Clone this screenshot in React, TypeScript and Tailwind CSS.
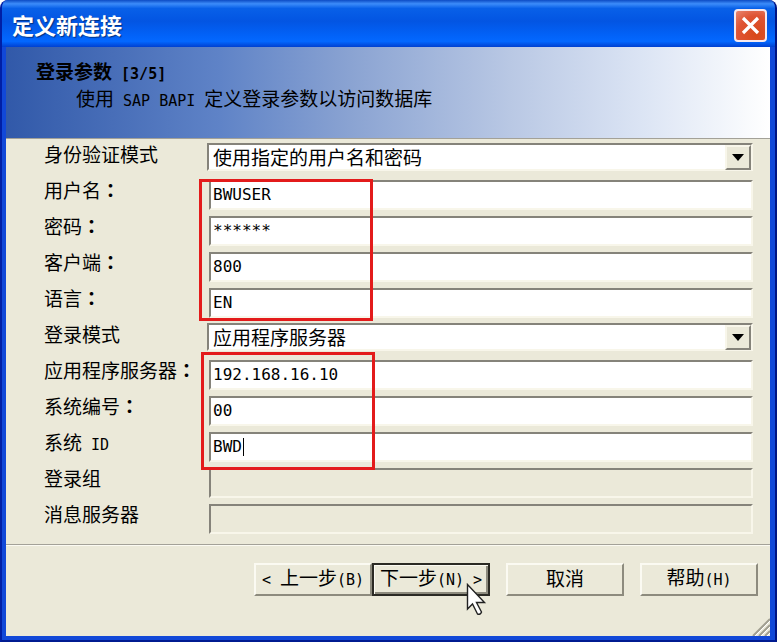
import React from 'react';

type Field = {
  id: string;
  label: string;
  value: string;
  type?: 'select';
  disabled?: boolean;
  caret?: boolean;
};

const authMode: Field = { id: 'authMode', label: '身份验证模式', value: '使用指定的用户名和密码', type: 'select' };

const credentials: Field[] = [
  { id: 'user', label: '用户名：', value: 'BWUSER' },
  { id: 'password', label: '密码：', value: '******' },
  { id: 'client', label: '客户端：', value: '800' },
  { id: 'language', label: '语言：', value: 'EN' }
];

const loginMode: Field = { id: 'loginMode', label: '登录模式', value: '应用程序服务器', type: 'select' };

const server: Field[] = [
  { id: 'appServer', label: '应用程序服务器：', value: '192.168.16.10' },
  { id: 'systemNumber', label: '系统编号：', value: '00' },
  { id: 'systemId', label: '系统 ID', value: 'BWD', caret: true }
];

const messageServer: Field[] = [
  { id: 'group', label: '登录组', value: '', disabled: true },
  { id: 'messageServer', label: '消息服务器', value: '', disabled: true }
];

// Latin runs use a smaller monospace face, the full-width colon is centred in its cell
const MixedText = ({ text }: { text: string }) => (
  <>
    {text.split(/([\x20-\x7e]+|：)/).map((part, index) => {
      if (part === '：') {
        return (
          <span key={index} className="font-['Noto_Sans_CJK_TC',sans-serif] font-bold" lang="zh-TW">
            {part}
          </span>
        );
      }
      return index % 2 ? (
        <span key={index} className="font-['DejaVu_Sans_Mono',monospace] text-[15px]">
          {part}
        </span>
      ) : (
        part
      );
    })}
  </>
);

const Row = ({ field }: { field: Field }) => (
  <div className="flex h-9 items-start">
    <label htmlFor={field.id} className="w-[163px] shrink-0 whitespace-pre leading-7">
      <MixedText text={field.label} />
    </label>
    {field.type === 'select' ? (
      <div className="relative mt-[3px] flex-1">
        <select
          id={field.id}
          className="block h-7 w-full appearance-none border-2 border-t-[#85837a] border-l-[#85837a] border-r-[#f8f6ea] border-b-[#f8f6ea] bg-white pl-1 leading-6"
        >
          <option>{field.value}</option>
        </select>
        <span className="pointer-events-none absolute top-0.5 right-0.5 flex h-[25px] w-[26px] items-center justify-center border-2 border-t-[#f8f6ea] border-l-[#f8f6ea] border-r-[#85837a] border-b-[#85837a] bg-[#ebe9d9]">
          <svg width="12" height="7" viewBox="0 0 12 7">
            <path d="M0 0h12L6 7z" fill="#000" />
          </svg>
        </span>
      </div>
    ) : (
      <div className="relative mt-1 ml-0.5 flex-1">
        <input
          id={field.id}
          type="text"
          defaultValue={field.value}
          disabled={field.disabled}
          className="block h-[30px] w-full border-2 border-t-[#85837a] border-l-[#85837a] border-r-[#f8f6ea] border-b-[#f8f6ea] bg-white pb-0.5 pl-0.5 font-['DejaVu_Sans_Mono',monospace] text-base outline-none disabled:bg-[#ebe9d9]"
        />
        {field.caret && <span className="absolute top-1.5 left-[34px] h-[18px] w-px bg-black" />}
      </div>
    )}
  </div>
);

const buttonBase =
  'relative h-[33px] w-[118px] whitespace-pre border-2 border-t-[#fbfaf2] border-l-[#fbfaf2] border-r-[#8d8b7e] border-b-[#8d8b7e] bg-[#ebe9d9] pb-1 leading-none';

export default function App() {
  return (
    <div className="min-h-screen bg-white font-['Noto_Sans_CJK_SC',sans-serif] text-[19px] text-black" lang="zh-CN">
      <div className="flex min-h-screen flex-col overflow-hidden rounded-t-lg border-x-2 border-b-2 border-l-[#001fa5] border-r-[#001583] border-b-[#001b91] bg-[#1148d8]">
        <header className="flex h-[47px] items-center justify-between bg-[linear-gradient(to_bottom,#0c4bc4_0%,#3c8cfa_8%,#0860e8_18%,#0355e2_45%,#0262f8_75%,#0368ff_88%,#0040d0_100%)] pt-1 pr-2 pl-2.5">
          <h1 className="pb-1 text-[22px] leading-7 font-bold text-white [text-shadow:1px_1px_1px_#003080]">定义新连接</h1>
          <button
            type="button"
            aria-label="关闭"
            className="flex size-[33px] items-center justify-center rounded-[4px] border-2 border-[#f7e9ee] bg-[radial-gradient(circle_at_70%_80%,#d84818,#df5434_60%,#e88872)]"
          >
            <svg width="19" height="19" viewBox="0 0 19 19">
              <path d="M2 2l15 15M17 2L2 17" stroke="#fff" strokeWidth="3.2" />
            </svg>
          </button>
        </header>

        <main className="mr-[5px] mb-1 ml-1 flex flex-1 flex-col bg-[#ebe9d9]">
          <div className="h-[91px] bg-[linear-gradient(to_right,#3159a9_0%,#5f83c7_28%,#8aa3d2_45%,#b9c8e4_66%,#dbe4f4_83%,#fff_100%)] pt-3 pl-[30px]">
            <h2 className="text-[19px] leading-6 font-bold whitespace-pre">
              <MixedText text="登录参数 [3/5]" />
            </h2>
            <p className="pl-10 leading-6 whitespace-pre">
              <MixedText text="使用 SAP BAPI 定义登录参数以访问数据库" />
            </p>
          </div>

          <form className="flex flex-1 flex-col border-t border-[#a3a198]">
            <div className="flex-1 pt-px pr-[17px] pl-[38px]">
              <Row field={authMode} />
              <div className="relative z-10">
                {credentials.map((field) => (
                  <Row key={field.id} field={field} />
                ))}
                <div className="pointer-events-none absolute top-[3px] -bottom-px left-[155px] w-[174px] border-3 border-[#e31b1b]" />
              </div>
              <Row field={loginMode} />
              <div className="relative z-10">
                {server.map((field) => (
                  <Row key={field.id} field={field} />
                ))}
                <div className="pointer-events-none absolute -top-1 -bottom-1.5 left-[157px] w-[174px] border-3 border-[#e31b1b]" />
              </div>
              {messageServer.map((field) => (
                <Row key={field.id} field={field} />
              ))}
            </div>

            <footer className="relative flex h-[92px] items-start justify-end border-t border-[#a3a198] pt-[18px] pr-3 shadow-[inset_0_1px_0_#fbfaf2]">
              <button type="button" className={buttonBase}>
                <MixedText text="< 上一步(B)" />
              </button>
              <button
                type="button"
                className="relative h-[33px] w-[118px] border-2 border-[#2b2a24] bg-[#ebe9d9] pb-1 leading-none whitespace-pre shadow-[inset_1px_1px_0_#fbfaf2,inset_-2px_-2px_0_#8d8b7e]"
              >
                <MixedText text="下一步(N) >" />
                <svg className="absolute top-[18px] left-[92px] z-10" width="21" height="34" viewBox="0 0 21 34">
                  <path
                    d="M1.5 1.5V26l5-5 5 10q3 1 4-2l-5-9.500h8z"
                    fill="#fff"
                    stroke="#222"
                    strokeWidth="1.400"
                  />
                </svg>
              </button>
              <button type="button" className={`${buttonBase} ml-4`}>
                取消
              </button>
              <button type="button" className={`${buttonBase} ml-4`}>
                <MixedText text="帮助(H)" />
              </button>
              <svg className="absolute right-0 bottom-0" width="18" height="18" viewBox="0 0 18 18">
                <path d="M1 18L18 1M7 18L18 7M13 18l5-5" stroke="#a19f91" strokeWidth="2" />
                <path d="M3 18L18 3M9 18l9-9M15 18l3-3" stroke="#fff" />
              </svg>
            </footer>
          </form>
        </main>
      </div>
    </div>
  );
}
